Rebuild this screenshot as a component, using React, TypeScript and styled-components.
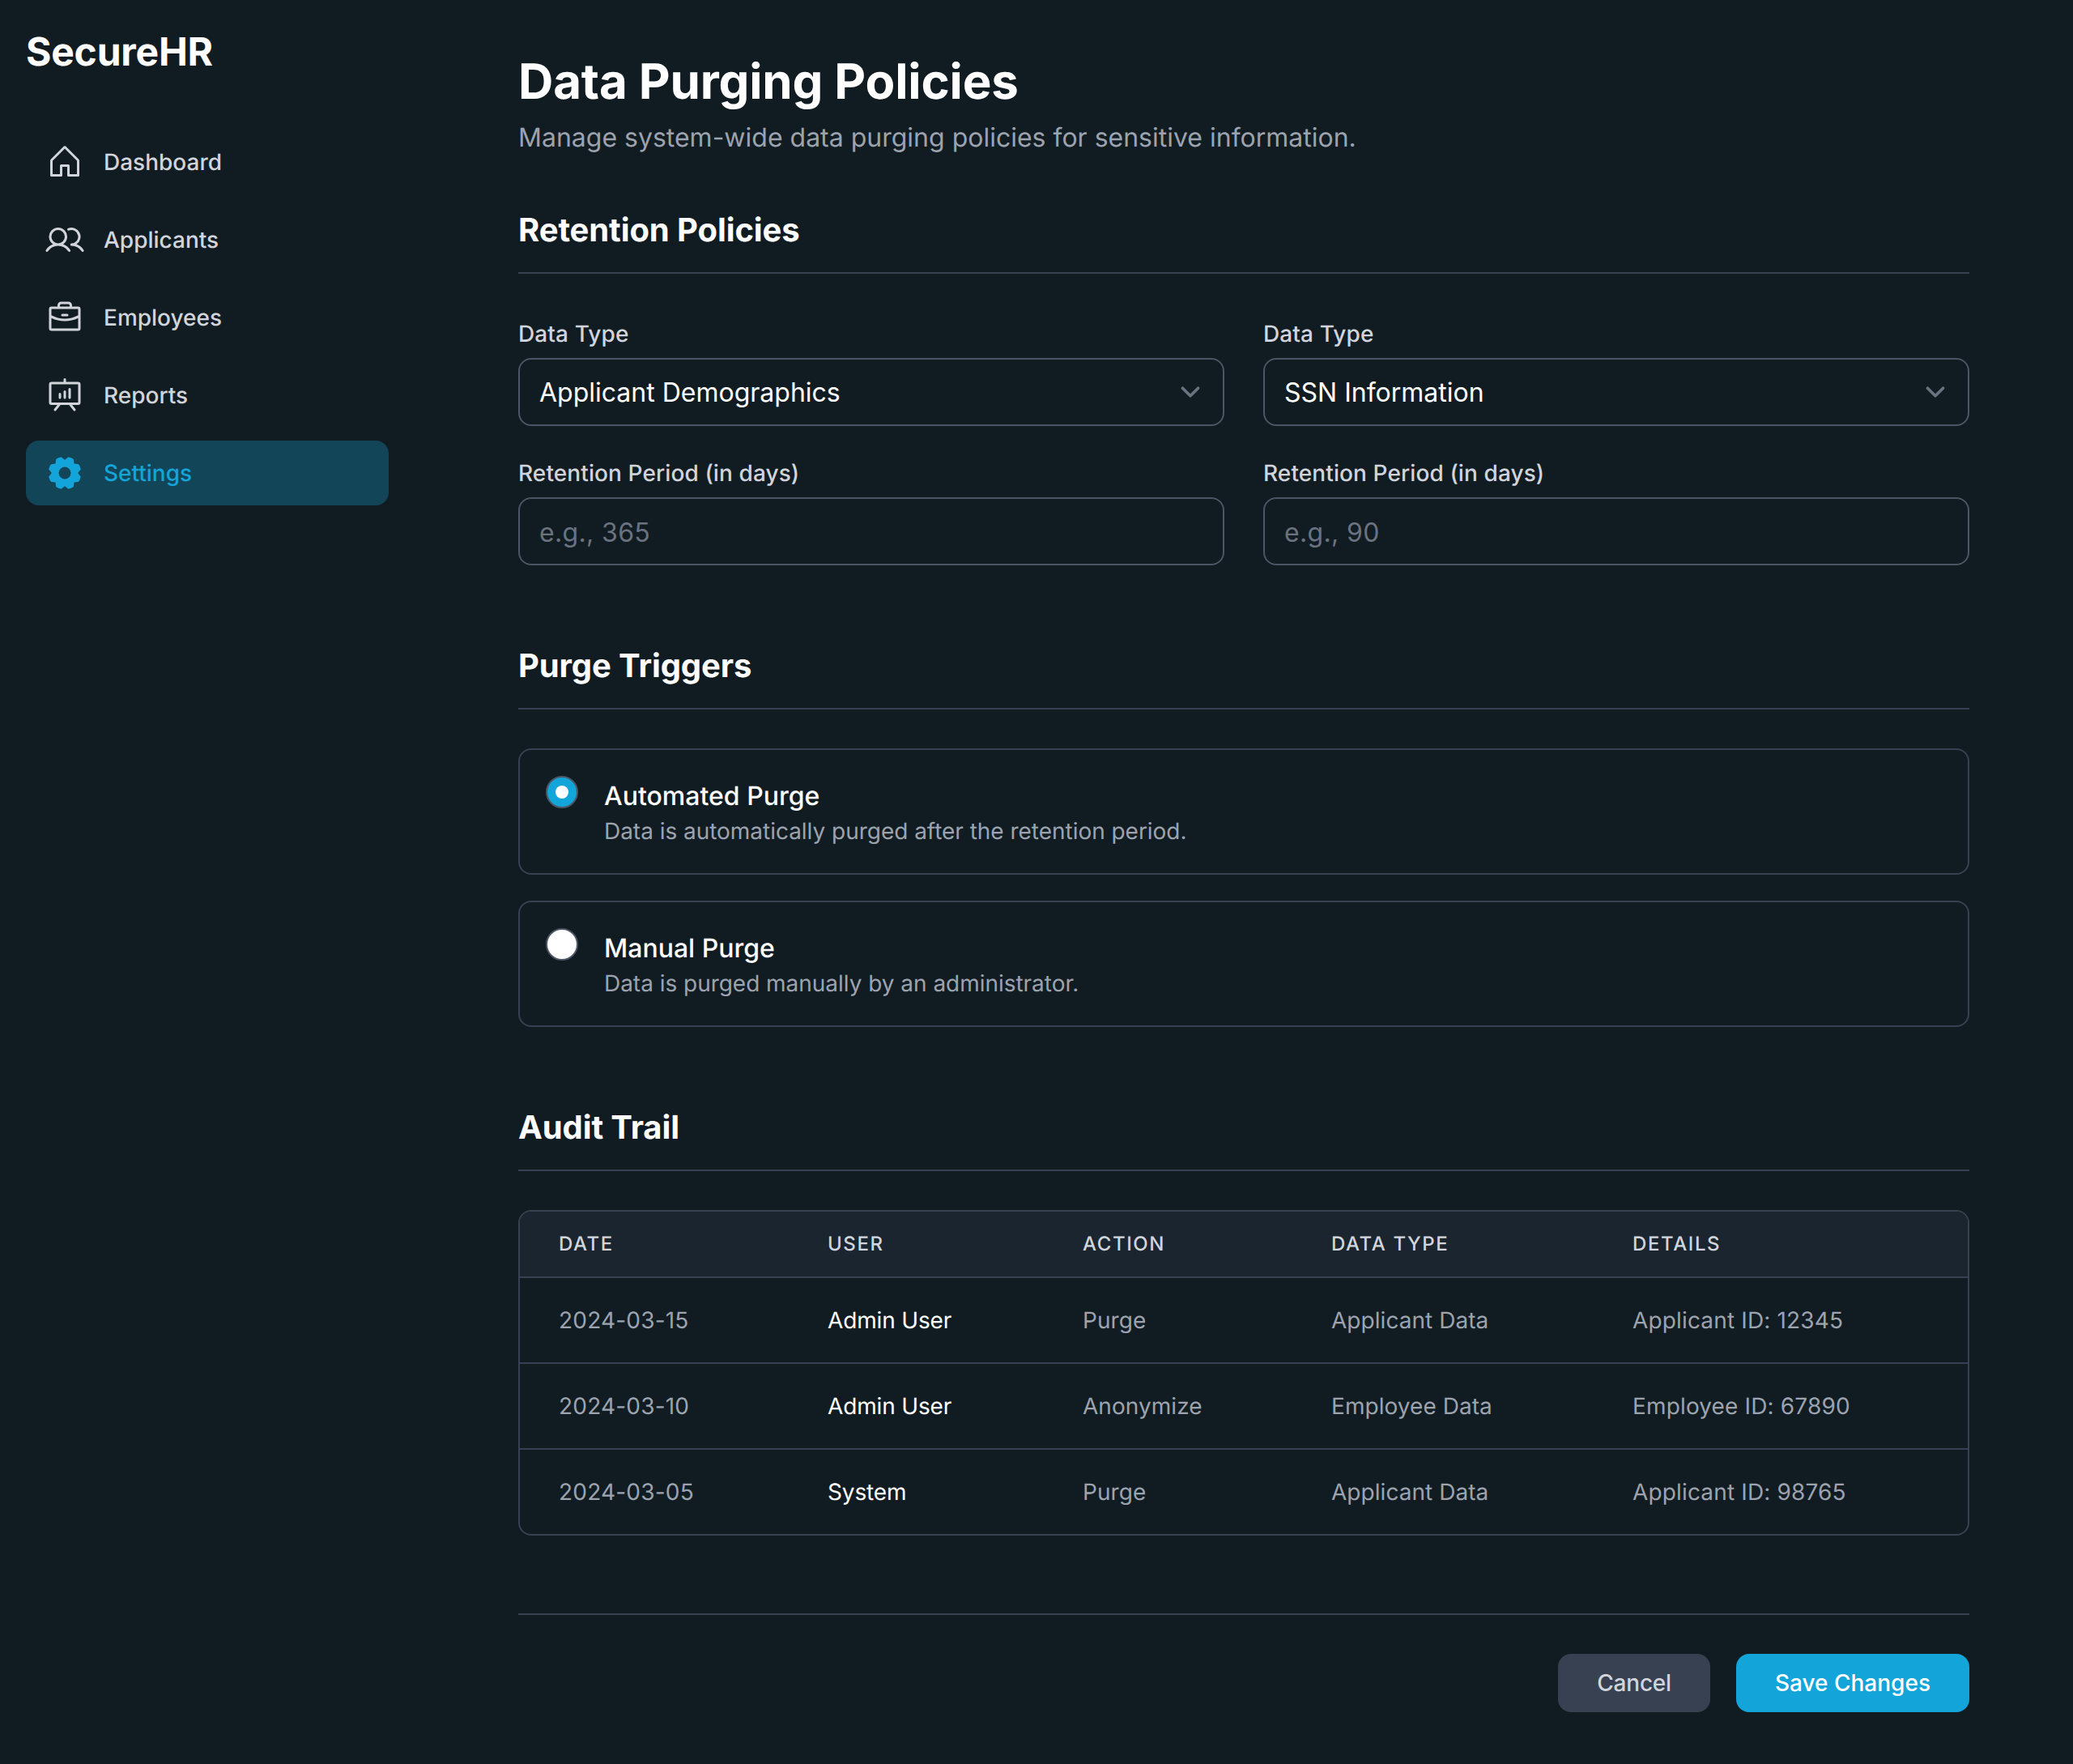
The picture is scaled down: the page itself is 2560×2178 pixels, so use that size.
import React from "react";
import styled, { createGlobalStyle } from "styled-components";
import { PiHouse, PiUsers, PiBriefcase, PiPresentationChart, PiGearFill } from "react-icons/pi";

const Global = createGlobalStyle`
  html, body { margin: 0; padding: 0; background: #111c22; }
  * { box-sizing: border-box; }
  body { font-family: Inter, "Noto Sans", sans-serif; color: #fff; text-rendering: geometricPrecision; }
`;

const Page = styled.div`
  display: flex;
  width: 2560px;
  min-height: 2178px;
  background: #111c22;
`;
const Sidebar = styled.aside`
  width: 512px;
  flex: none;
  padding: 32px;
`;
const Logo = styled.div`
  font-size: 48px;
  line-height: 64px;
  font-weight: 700;
  letter-spacing: -0.2px;
  margin-bottom: 64px;
`;
const Nav = styled.nav`
  display: flex;
  flex-direction: column;
  gap: 16px;
`;
const NavItem = styled.a<{ $active?: boolean }>`
  display: flex;
  align-items: center;
  gap: 24px;
  height: 80px;
  padding: 0 24px;
  border-radius: 16px;
  font-size: 28px;
  font-weight: 500;
  color: ${(p) => (p.$active ? "#13a4d9" : "#d1d5db")};
  background: ${(p) => (p.$active ? "#134558" : "transparent")};
  svg { flex: none; }
`;
const Main = styled.main`
  flex: 1;
  padding: 64px 128px;
`;
const Title = styled.h1`
  margin: 0;
  font-size: 60px;
  line-height: 74px;
  font-weight: 700;
  letter-spacing: -0.15px;
`;
const Subtitle = styled.p`
  margin: 8px 0 62px;
  font-size: 32px;
  line-height: 48px;
  color: #9ca3af;
`;
const Section = styled.section`
  margin-bottom: 96px;
`;
const SectionTitle = styled.h2`
  margin: 0 0 48px;
  padding-bottom: 24px;
  border-bottom: 2px solid #374151;
  font-size: 40px;
  line-height: 56px;
  font-weight: 700;
  letter-spacing: -0.1px;
`;
const FieldGrid = styled.div`
  display: grid;
  grid-template-columns: 1fr 1fr;
  column-gap: 48px;
  row-gap: 32px;
`;
const Field = styled.label`
  display: block;
`;
const FieldLabel = styled.span`
  display: block;
  margin-bottom: 4px;
  font-size: 28px;
  line-height: 52px;
  font-weight: 500;
  letter-spacing: 0.1px;
  color: #d1d5db;
`;
const SelectWrap = styled.div`
  position: relative;
  svg {
    position: absolute;
    right: 18px;
    top: 18px;
    pointer-events: none;
  }
`;
const controlCss = `
  display: block;
  width: 100%;
  height: 84px;
  border: 2px solid #4b5563;
  border-radius: 16px;
  background: #111c22;
  color: #fff;
  font-family: Inter, "Noto Sans", sans-serif;
  font-size: 32px;
  outline: none;
`;
const Select = styled.select`
  ${controlCss}
  padding: 0 24px;
  appearance: none;
`;
const Input = styled.input`
  ${controlCss}
  padding: 2px 24px 0;
  letter-spacing: 0.35px;
  &::placeholder { color: #6b7280; opacity: 1; }
`;
const Options = styled.div`
  display: flex;
  flex-direction: column;
  gap: 32px;
`;
const OptionCard = styled.label`
  display: flex;
  align-items: flex-start;
  gap: 32px;
  padding: 32px;
  border: 2px solid #374151;
  border-radius: 16px;
`;
const Radio = styled.span<{ $checked?: boolean }>`
  flex: none;
  display: flex;
  align-items: center;
  justify-content: center;
  width: 40px;
  height: 40px;
  border-radius: 50%;
  border: 2px solid #4b5563;
  background: ${(p) => (p.$checked ? "#13a4d9" : "#fff")};
  &::after {
    content: "";
    display: ${(p) => (p.$checked ? "block" : "none")};
    width: 16px;
    height: 16px;
    border-radius: 50%;
    background: #fff;
  }
`;
const OptionText = styled.div`
  padding-top: 2px;
`;
const OptionTitle = styled.div`
  font-size: 32px;
  line-height: 46px;
  font-weight: 500;
`;
const OptionDesc = styled.div`
  font-size: 28px;
  line-height: 40px;
  letter-spacing: -0.03px;
  color: #9ca3af;
`;
const TableWrap = styled.div`
  border: 2px solid #374151;
  border-radius: 16px;
  overflow: hidden;
`;
const Table = styled.table`
  width: 100%;
  table-layout: fixed;
  border-collapse: collapse;
`;
const Th = styled.th<{ $width: number }>`
  width: ${(p) => p.$width}px;
  padding: 24px 48px;
  background: #1a2530;
  border-bottom: 2px solid #374151;
  text-align: left;
  font-size: 24px;
  line-height: 32px;
  font-weight: 500;
  letter-spacing: 1.6px;
  text-transform: uppercase;
  color: #d1d5db;
`;
const Td = styled.td<{ $strong?: boolean }>`
  padding: 32px 48px;
  font-size: 28px;
  line-height: 40px;
  font-weight: 400;
  white-space: nowrap;
  letter-spacing: ${(p) => (p.$strong ? "-0.15px" : "0.05px")};
  color: ${(p) => (p.$strong ? "#fff" : "#9ca3af")};
  &:first-child { letter-spacing: 0.2px; }
  &:last-child { letter-spacing: 0.15px; }
`;
const Tr = styled.tr`
  & + & td { border-top: 2px solid #374151; }
`;
const Footer = styled.footer`
  display: flex;
  justify-content: flex-end;
  gap: 32px;
  padding-top: 48px;
  border-top: 2px solid #374151;
`;
const Button = styled.button<{ $primary?: boolean }>`
  height: 72px;
  padding: 0 48px;
  border: 0;
  border-radius: 16px;
  font-family: Inter, "Noto Sans", sans-serif;
  font-size: 28px;
  font-weight: 500;
  letter-spacing: ${(p) => (p.$primary ? "0" : "-0.2px")};
  color: ${(p) => (p.$primary ? "#fff" : "#d1d5db")};
  background: ${(p) => (p.$primary ? "#13a4d9" : "#374151")};
`;

const Chevron = () => (
  <svg width="48" height="48" viewBox="0 0 20 20" fill="none">
    <path d="M6 8l4 4 4-4" stroke="#6b7280" strokeWidth="1.5" strokeLinecap="round" strokeLinejoin="round" />
  </svg>
);

const nav = [
  { label: "Dashboard", Icon: PiHouse },
  { label: "Applicants", Icon: PiUsers },
  { label: "Employees", Icon: PiBriefcase },
  { label: "Reports", Icon: PiPresentationChart },
  { label: "Settings", Icon: PiGearFill, active: true },
];
const policies = [
  { value: "Applicant Demographics", placeholder: "e.g., 365" },
  { value: "SSN Information", placeholder: "e.g., 90" },
];
const columns = [
  { label: "Date", width: 332 },
  { label: "User", width: 315 },
  { label: "Action", width: 307 },
  { label: "Data Type", width: 372 },
  { label: "Details", width: 462 },
];
const rows = [
  ["2024-03-15", "Admin User", "Purge", "Applicant Data", "Applicant ID: 12345"],
  ["2024-03-10", "Admin User", "Anonymize", "Employee Data", "Employee ID: 67890"],
  ["2024-03-05", "System", "Purge", "Applicant Data", "Applicant ID: 98765"],
];

export default function App() {
  return (
    <Page>
      <Global />
      <Sidebar>
        <Logo>SecureHR</Logo>
        <Nav>
          {nav.map(({ label, Icon, active }) => (
            <NavItem key={label} $active={active}>
              <Icon size={48} />
              {label}
            </NavItem>
          ))}
        </Nav>
      </Sidebar>
      <Main>
        <Title>Data Purging Policies</Title>
        <Subtitle>Manage system-wide data purging policies for sensitive information.</Subtitle>
        <Section>
          <SectionTitle>Retention Policies</SectionTitle>
          <FieldGrid>
            {policies.map((p) => (
              <Field key={p.value}>
                <FieldLabel>Data Type</FieldLabel>
                <SelectWrap>
                  <Select defaultValue={p.value}>
                    <option>{p.value}</option>
                  </Select>
                  <Chevron />
                </SelectWrap>
              </Field>
            ))}
            {policies.map((p) => (
              <Field key={p.placeholder}>
                <FieldLabel>Retention Period (in days)</FieldLabel>
                <Input placeholder={p.placeholder} />
              </Field>
            ))}
          </FieldGrid>
        </Section>
        <Section>
          <SectionTitle>Purge Triggers</SectionTitle>
          <Options>
            <OptionCard>
              <Radio $checked />
              <OptionText>
                <OptionTitle>Automated Purge</OptionTitle>
                <OptionDesc>Data is automatically purged after the retention period.</OptionDesc>
              </OptionText>
            </OptionCard>
            <OptionCard>
              <Radio />
              <OptionText>
                <OptionTitle>Manual Purge</OptionTitle>
                <OptionDesc>Data is purged manually by an administrator.</OptionDesc>
              </OptionText>
            </OptionCard>
          </Options>
        </Section>
        <Section>
          <SectionTitle>Audit Trail</SectionTitle>
          <TableWrap>
            <Table>
              <thead>
                <tr>
                  {columns.map((c) => (
                    <Th key={c.label} $width={c.width}>{c.label}</Th>
                  ))}
                </tr>
              </thead>
              <tbody>
                {rows.map((r) => (
                  <Tr key={r[0]}>
                    {r.map((c, i) => (
                      <Td key={i} $strong={i === 1}>{c}</Td>
                    ))}
                  </Tr>
                ))}
              </tbody>
            </Table>
          </TableWrap>
        </Section>
        <Footer>
          <Button>Cancel</Button>
          <Button $primary>Save Changes</Button>
        </Footer>
      </Main>
    </Page>
  );
}
